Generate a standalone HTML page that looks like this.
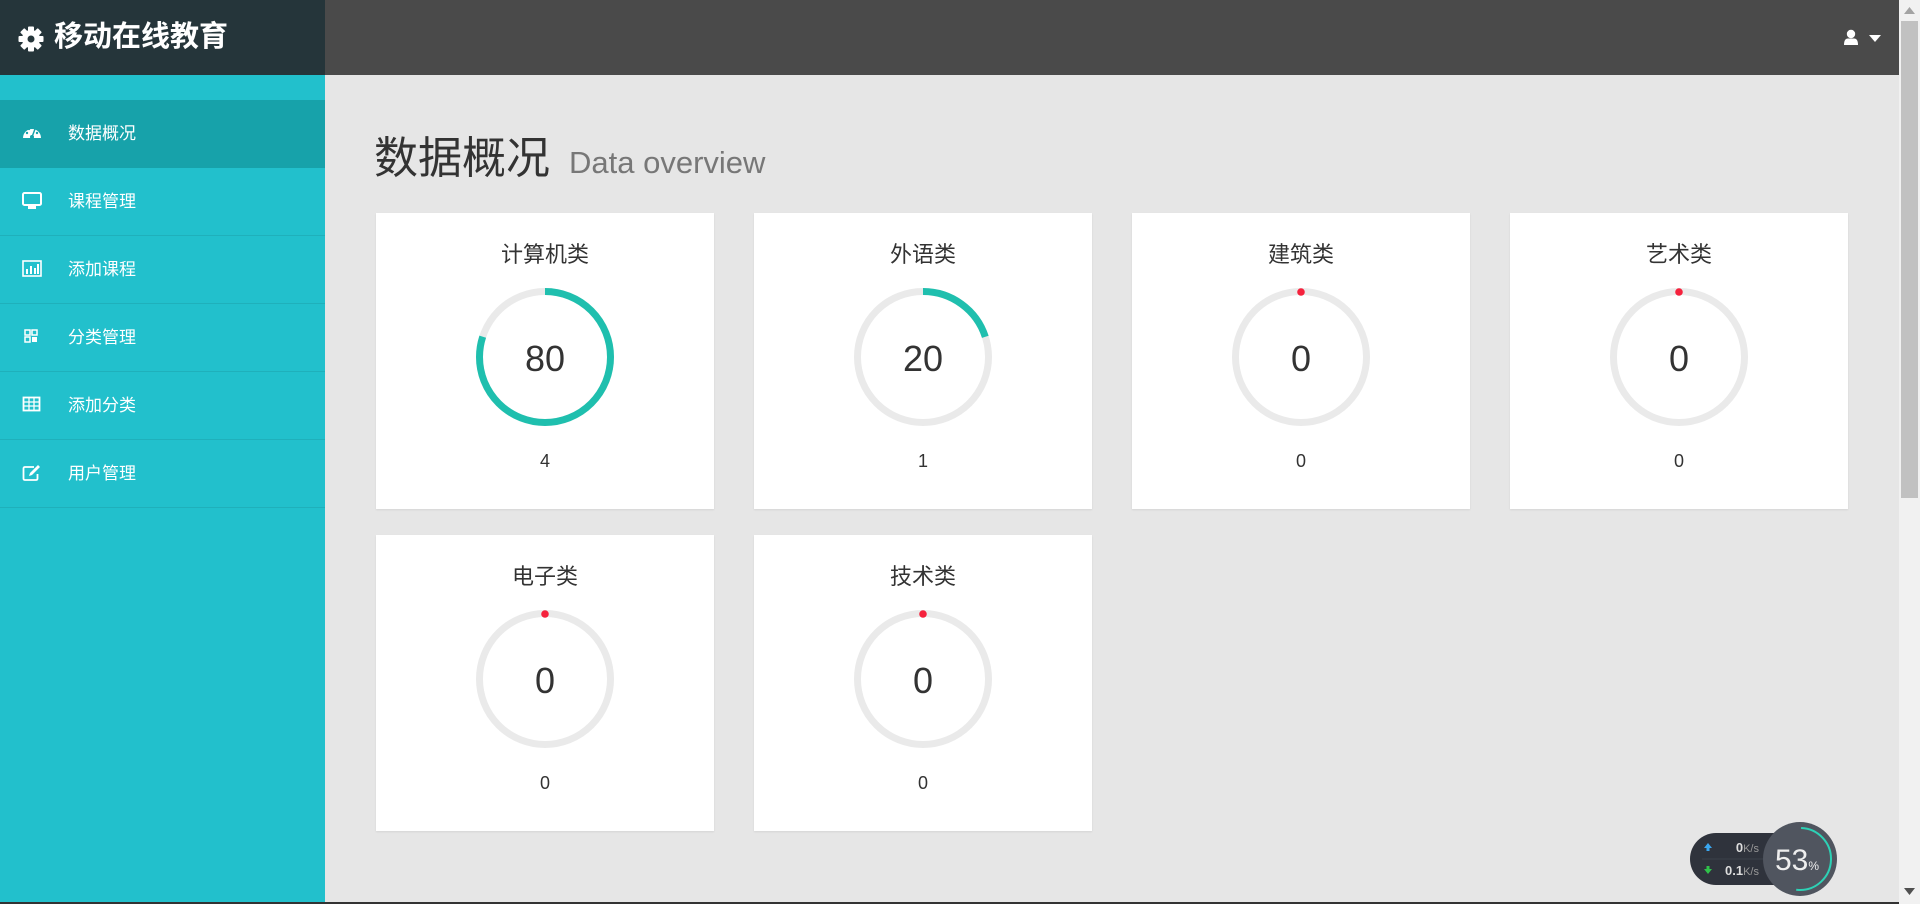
<!DOCTYPE html>
<html><head><meta charset="utf-8"><style>
*{margin:0;padding:0;box-sizing:border-box}
body{width:1920px;height:904px;overflow:hidden;background:#e6e6e6;font-family:"Liberation Sans","Noto Sans CJK SC",sans-serif;position:relative}
.logo{position:absolute;left:0;top:0;width:325px;height:75px;background:#25353a;color:#fff;font-weight:bold;font-size:29px;line-height:75px;padding-left:54px}
.logo svg{position:absolute;left:18px;top:26px}
.top{position:absolute;left:325px;top:0;width:1574px;height:75px;background:#4a4a4a}
.side{position:absolute;left:0;top:75px;width:325px;height:829px;background:#22c0cc}
.item{position:absolute;left:0;width:325px;height:68px;border-bottom:1px solid #1fb0bb;color:#fff;font-size:17px;line-height:68px;padding-left:68px}
.item.act{background:#17a2aa;border-bottom:none}
.item svg{position:absolute;left:22px;top:24px}
.sb{position:absolute;left:1899px;top:0;width:21px;height:904px;background:#f1f1f1}
.thumb{position:absolute;left:1901px;top:21px;width:17px;height:477px;background:#c1c1c1}
h1{position:absolute;left:374px;top:122px;font-weight:normal;font-size:44px;color:#333;white-space:nowrap}
h1 small{font-size:31px;color:#777;margin-left:19px}
.card{position:absolute;width:338px;height:296px;background:#fff;box-shadow:0 1px 2px rgba(0,0,0,.08);text-align:center;color:#333}
.card .t{position:absolute;top:24px;left:0;width:100%;font-size:22px}
.card svg{position:absolute;left:100px;top:75px}
.card .n{position:absolute;top:125px;left:0;width:100%;font-size:36px}
.card .c{position:absolute;top:238px;left:0;width:100%;font-size:18px}
</style></head><body>
<div class="logo"><svg width="26" height="26" viewBox="0 0 26 26"><g fill="#fff" transform="translate(13 13)"><rect x="-3" y="-12.5" width="6" height="25" rx="1"/><rect x="-3" y="-12.5" width="6" height="25" rx="1" transform="rotate(45)"/><rect x="-3" y="-12.5" width="6" height="25" rx="1" transform="rotate(90)"/><rect x="-3" y="-12.5" width="6" height="25" rx="1" transform="rotate(135)"/><circle r="9"/></g><circle cx="13" cy="13" r="3.5" fill="#25353a"/></svg>移动在线教育</div>
<div class="top">
<svg style="position:absolute;left:1518px;top:29px" width="16" height="17" viewBox="0 0 16 17"><circle cx="8" cy="5" r="4.2" fill="#fff"/><path d="M1 16 Q1 9.5 5 9.5 L11 9.5 Q15 9.5 15 16Z" fill="#fff"/></svg>
<svg style="position:absolute;left:1544px;top:35px" width="12" height="7"><path d="M0 0H12L6 7Z" fill="#fff"/></svg>
</div>
<div class="side">
<div class="item act" style="top:25px"><svg width="20" height="16" viewBox="0 0 20 16"><path d="M1 14 A9 9 0 1 1 19 14Z" fill="#fff"/><circle cx="10" cy="13" r="2" fill="#17a2aa"/><path d="M10 13 L13 5" stroke="#17a2aa" stroke-width="1.5"/><circle cx="5" cy="9" r="1.2" fill="#17a2aa"/><circle cx="7" cy="5" r="1.2" fill="#17a2aa"/><circle cx="15" cy="9" r="1.2" fill="#17a2aa"/></svg>数据概况</div>
<div class="item" style="top:93px"><svg width="20" height="18"><rect x="1" y="1" width="18" height="12" rx="1.5" fill="none" stroke="#fff" stroke-width="2"/><rect x="6" y="14" width="8" height="3" fill="#fff"/></svg>课程管理</div>
<div class="item" style="top:161px"><svg width="20" height="18"><rect x="1" y="1" width="18" height="15" fill="none" stroke="#fff" stroke-width="1.6"/><rect x="4" y="9" width="2" height="5" fill="#fff"/><rect x="8" y="6" width="2" height="8" fill="#fff"/><rect x="12" y="8" width="2" height="6" fill="#fff"/><rect x="15" y="4" width="2" height="10" fill="#fff"/></svg>添加课程</div>
<div class="item" style="top:229px"><svg width="20" height="18"><g fill="none" stroke="#fff" stroke-width="1.5"><rect x="3" y="2" width="5" height="5"/><rect x="10" y="2" width="5" height="5"/><rect x="3" y="9" width="5" height="5"/></g><rect x="10" y="9" width="5" height="5" fill="#fff"/></svg>分类管理</div>
<div class="item" style="top:297px"><svg width="20" height="18"><rect x="1.5" y="1.5" width="16" height="13" fill="none" stroke="#fff" stroke-width="1.8"/><path d="M1.5 6H17.5M1.5 10H17.5M7 1.5V14.5M12 1.5V14.5" stroke="#fff" stroke-width="1.3"/></svg>添加分类</div>
<div class="item" style="top:365px"><svg width="20" height="18"><path d="M12 3H3Q1.5 3 1.5 4.5V14.5Q1.5 16 3 16H14Q15.5 16 15.5 14.5V10" fill="none" stroke="#fff" stroke-width="1.8"/><path d="M7 12L8 9L16 1L18 3L10 11Z" fill="#fff"/></svg>用户管理</div>
</div>
<h1>数据概况<small>Data overview</small></h1>

<div class="card" style="left:376px;top:213px"><div class="t">计算机类</div><svg width="138" height="138"><circle cx="69" cy="69" r="65.5" fill="none" stroke="#eaeaea" stroke-width="7"/><circle cx="69" cy="69" r="65.5" fill="none" stroke="#1fbfae" stroke-width="7" stroke-dasharray="329.2 500" transform="rotate(-90 69 69)"/></svg><div class="n">80</div><div class="c">4</div></div>
<div class="card" style="left:754px;top:213px"><div class="t">外语类</div><svg width="138" height="138"><circle cx="69" cy="69" r="65.5" fill="none" stroke="#eaeaea" stroke-width="7"/><circle cx="69" cy="69" r="65.5" fill="none" stroke="#1fbfae" stroke-width="7" stroke-dasharray="82.3 500" transform="rotate(-90 69 69)"/></svg><div class="n">20</div><div class="c">1</div></div>
<div class="card" style="left:1132px;top:213px"><div class="t">建筑类</div><svg width="138" height="138"><circle cx="69" cy="69" r="65.5" fill="none" stroke="#eaeaea" stroke-width="7"/><circle cx="69" cy="4" r="3.8" fill="#f5223d"/></svg><div class="n">0</div><div class="c">0</div></div>
<div class="card" style="left:1510px;top:213px"><div class="t">艺术类</div><svg width="138" height="138"><circle cx="69" cy="69" r="65.5" fill="none" stroke="#eaeaea" stroke-width="7"/><circle cx="69" cy="4" r="3.8" fill="#f5223d"/></svg><div class="n">0</div><div class="c">0</div></div>
<div class="card" style="left:376px;top:535px"><div class="t">电子类</div><svg width="138" height="138"><circle cx="69" cy="69" r="65.5" fill="none" stroke="#eaeaea" stroke-width="7"/><circle cx="69" cy="4" r="3.8" fill="#f5223d"/></svg><div class="n">0</div><div class="c">0</div></div>
<div class="card" style="left:754px;top:535px"><div class="t">技术类</div><svg width="138" height="138"><circle cx="69" cy="69" r="65.5" fill="none" stroke="#eaeaea" stroke-width="7"/><circle cx="69" cy="4" r="3.8" fill="#f5223d"/></svg><div class="n">0</div><div class="c">0</div></div>

<svg style="position:absolute;left:1688px;top:818px" width="150" height="80">
<rect x="2" y="15" width="120" height="52" rx="26" fill="#2f333c"/>
<path d="M14 41H90" stroke="#3b404a"/>
<path d="M16 30l4-5 4 5h-2.5v3h-3v-3z" fill="#3aa7f0"/>
<path d="M16 51l4 5 4-5h-2.5v-3h-3v3z" fill="#2fc24a"/>
<text x="71" y="34" fill="#ddd" font-size="13" font-weight="bold" text-anchor="end" font-family="Liberation Sans">0<tspan font-size="11" font-weight="normal" fill="#999">K/s</tspan></text>
<text x="71" y="57" fill="#ddd" font-size="13" font-weight="bold" text-anchor="end" font-family="Liberation Sans">0.1<tspan font-size="11" font-weight="normal" fill="#999">K/s</tspan></text>
<circle cx="112" cy="41" r="37" fill="#50555f"/>
<circle cx="112" cy="41" r="31" fill="none" stroke="#2dd1b5" stroke-width="2" stroke-dasharray="100 200" transform="rotate(-88 112 41)"/>
<text x="109" y="52" fill="#eee" font-size="30" text-anchor="middle" font-family="Liberation Sans">53<tspan font-size="12">%</tspan></text>
</svg>
<div class="sb"></div><div class="thumb"></div>
<svg style="position:absolute;left:1904px;top:7px" width="11" height="7"><path d="M0 7H11L5.5 0Z" fill="#a3a3a3"/></svg>
<svg style="position:absolute;left:1904px;top:888px" width="11" height="7"><path d="M0 0H11L5.5 7Z" fill="#505050"/></svg>
<div style="position:absolute;left:0;top:902px;width:1899px;height:2px;background:#333"></div>
</body></html>
